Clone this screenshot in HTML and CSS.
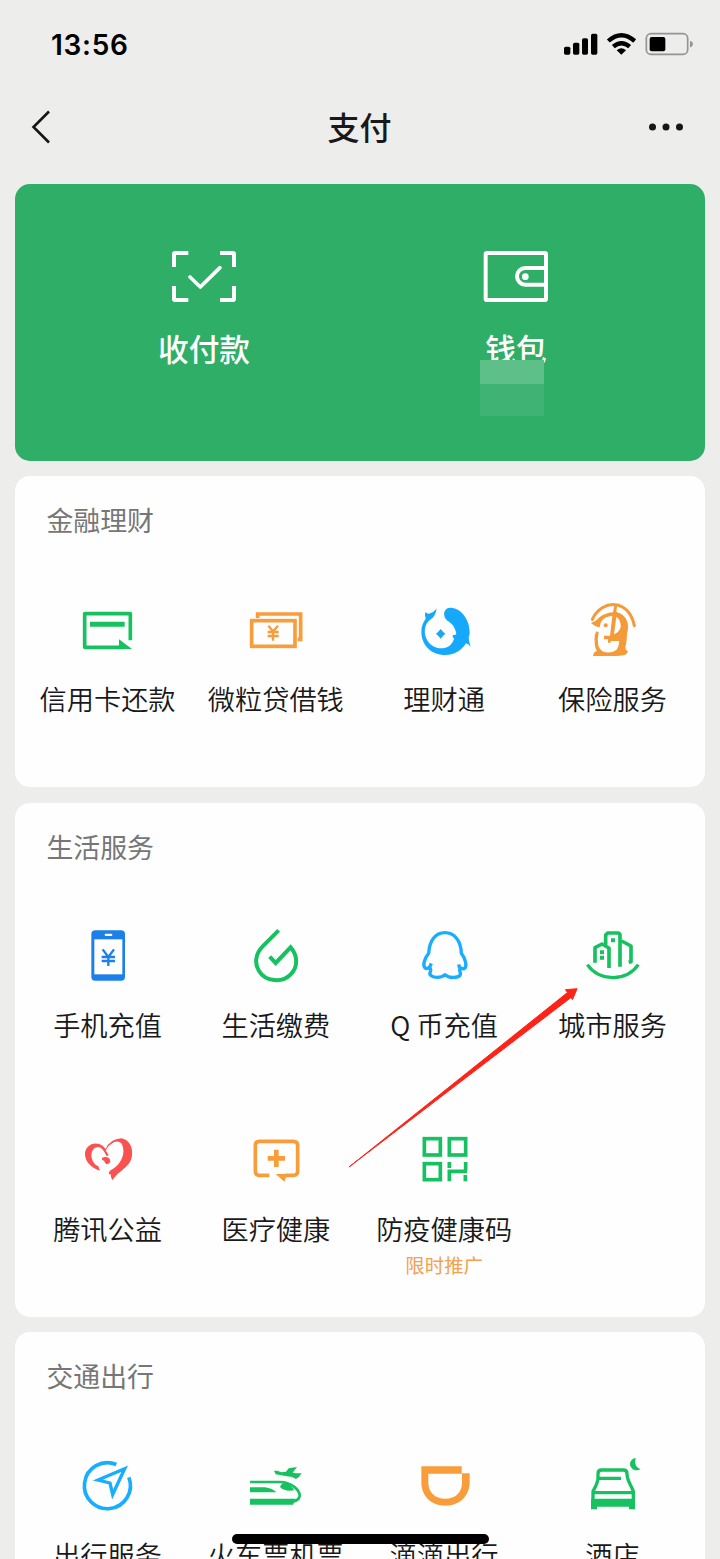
FILE: index.html
```
<!DOCTYPE html>
<html lang="zh-CN">
<head>
<meta charset="utf-8">
<title>支付</title>
<link rel="stylesheet" href="styles.css">
</head>
<body>
<div class="screen">
  <header class="status-bar">
    <span class="time">13:56</span>
    <svg class="status-icons" viewBox="0 0 540 150">
      <rect x="72" y="80" width="19" height="24" rx="5"/>
      <rect x="99" y="68" width="19" height="36" rx="5"/>
      <rect x="126" y="55" width="18" height="49" rx="5"/>
      <rect x="153" y="41" width="19" height="63" rx="5"/>
      <g fill="none" stroke="#000" stroke-width="13">
        <path d="M205 63Q244 28 284 63"/>
        <path d="M220 80Q244 59 269 80"/>
      </g>
      <path d="M230 91Q244 78 258 91L244 104Z"/>
      <rect x="319" y="41" width="124" height="62" rx="14" fill="none" stroke="#949494" stroke-width="5"/>
      <rect x="329" y="51" width="47" height="43" rx="6"/>
      <path d="M450 62Q459 65 459 72Q459 79 450 83Z" fill="#949494"/>
    </svg>
  </header>
  <nav class="nav-bar">
    <svg class="nav-icon" viewBox="0 0 40 40"><path d="M29 4.500L13.500 20L29 35.500" fill="none" stroke="#161616" stroke-width="2.600"/></svg>
    <h1 class="nav-title">支付</h1>
    <svg class="nav-icon" viewBox="0 0 40 40"><g fill="#161616"><circle cx="6.500" cy="20" r="3.500"/><circle cx="20" cy="20" r="3.500"/><circle cx="33.500" cy="20" r="3.500"/></g></svg>
  </nav>

  <main class="cards">
    <section class="pay-card">
      <div class="pay-item">
        <svg class="pay-icon" viewBox="84 30 216 216" fill="none" stroke="#fff" stroke-width="12">
          <path d="M145 69H106Q102 69 102 73V111M240 69H278Q282 69 282 73V111M102 168V206Q102 210 106 210H145M240 210H278Q282 210 282 206V168"/>
          <path d="M150 141L181 171L240 113" stroke-width="11" stroke-linecap="round" stroke-linejoin="round"/>
        </svg>
        <span class="pay-label">收付款</span>
      </div>
      <div class="pay-item">
        <svg class="pay-icon" viewBox="1020 30 216 216" fill="none" stroke="#fff" stroke-width="12">
          <rect x="1037" y="69" width="181" height="141" rx="4"/>
          <path d="M1218 114H1156A25 25 0 0 0 1156 164H1218"/>
          <circle cx="1156" cy="140" r="10" fill="#fff" stroke="none"/>
        </svg>
        <span class="pay-label">钱包</span>
        <span class="balance-mask"></span>
      </div>
    </section>

    <section class="card finance">
      <h2 class="card-title">金融理财</h2>
      <div class="grid">
        <div class="item">
          <svg class="icon" viewBox="51 30 180 180">
            <path d="M208 151V71H71V172H190" fill="none" stroke="#17c160" stroke-width="11" stroke-linejoin="round"/>
            <path d="M87 103H191" stroke="#17c160" stroke-width="15"/>
            <path d="M174 148L213 177H174Z" fill="#17c160"/>
          </svg>
          <span class="label">信用卡还款</span>
        </div>
        <div class="item">
          <svg class="icon" viewBox="556 30 180 180" fill="none" stroke="#f99d3b" stroke-width="11">
            <rect x="573" y="92" width="130" height="77"/>
            <path d="M591 84V72H720V148H711"/>
            <path d="M623 107L637 124L652 107M637 124V152M621 126H654M621 138H654" stroke-width="7"/>
          </svg>
          <span class="label">微粒贷借钱</span>
        </div>
        <div class="item">
          <svg class="icon" viewBox="71 30 180 180" fill="#16a8fb">
            <path d="M105 66Q113 74 121 69Q130 66 139 56Q136 78 121 88C101 102 98 132 112 153C127 176 158 181 177 168Q190 157 191 144Q185 143 188 134Q194 136 198 132C195 115 188 103 174 94C163 87 160 75 162 66Q167 52 182 53C213 55 239 89 238 129Q237 137 235 143Q236 156 241 170Q234 161 227 160C211 186 182 199 153 194C110 189 86 150 95 108Q98 97 106 86Q102 76 105 66Z"/>
            <path d="M151 117L158 125L165 131L158 138L151 146L144 138L137 131L144 125Z"/>
          </svg>
          <span class="label">理财通</span>
        </div>
        <div class="item">
          <svg class="icon" viewBox="576 30 180 180" fill="#f49a39">
            <path d="M607 88C622 56 649 42 675 44C704 46 725 70 733 107" fill="none" stroke="#f49a39" stroke-width="9" stroke-linecap="round"/>
            <path fill-rule="evenodd" d="M603 99Q618 94 627 83Q643 69 669 67L674 42H682L679 66Q703 72 711 93Q717 109 711 132Q710 158 706 171Q706 180 713 183Q714 192 701 196Q686 199 666 198H609Q611 185 621 183Q615 177 614 156Q612 136 619 124L626 127Q621 148 625 167Q631 184 648 187Q666 190 680 179Q687 169 688 153H662V158H654V148H642V137H660L667 77Q645 80 638 89Q630 97 629 112Q620 112 603 99ZM679 80L672 133Q689 126 692 111Q694 91 679 80Z"/>
            <circle cx="647" cy="106" r="6"/>
          </svg>
          <span class="label">保险服务</span>
        </div>
      </div>
    </section>

    <section class="card life">
      <h2 class="card-title">生活服务</h2>
      <div class="grid">
        <div class="item">
          <svg class="icon" viewBox="51 21 180 180">
            <rect x="91" y="34" width="101" height="151" rx="12" fill="#1d7fe9"/>
            <rect x="100" y="61" width="84" height="105" fill="#fff"/>
            <rect x="131" y="44" width="23" height="7" rx="3.500" fill="#fff"/>
            <path d="M125 91L142 114L159 91M142 114V141M122 114H162M122 126H162" fill="none" stroke="#1d7fe9" stroke-width="7"/>
          </svg>
          <span class="label">手机充值</span>
        </div>
        <div class="item">
          <svg class="icon" viewBox="556 21 180 180" fill="none" stroke="#17c160" stroke-width="12">
            <path d="M654 34L606 82C584 104 581 134 595 156C614 188 664 193 690 166C714 142 710 108 690 85L645 132L627 113"/>
          </svg>
          <span class="label">生活缴费</span>
        </div>
        <div class="item">
          <svg class="icon" viewBox="71 21 180 180" fill="none" stroke="#18adff" stroke-width="10" stroke-linejoin="round">
            <path d="M123 133L118 144Q111 151 104 147C96 139 103 118 115 103C117 65 135 41 164 41C192 41 212 65 213 103C225 119 230 138 224 147Q218 153 207 144L205 136M118 144Q123 153 120 158C115 168 125 175 141 175Q156 175 164 167Q174 176 190 175C208 175 213 168 209 158Q206 153 210 147"/>
          </svg>
          <span class="label">Q 币充值</span>
        </div>
        <div class="item">
          <svg class="icon" viewBox="576 21 180 180" fill="none" stroke="#17c160" stroke-width="11" stroke-linejoin="round">
            <path d="M615 131V86L636 75L657 87V147M647 77V48L653 42H686L690 47V143M695 66L723 81V128L716 130"/>
            <path d="M592 137C627 187 708 190 745 137" stroke-width="10"/>
            <path d="M630 100H642M630 116H642M663 64H675" stroke-width="12"/>
          </svg>
          <span class="label">城市服务</span>
        </div>
        <div class="item">
          <svg class="icon" viewBox="51 16 180 180" fill="#fa5151">
            <path d="M72 91C70 67 93 51 115 58Q127 62 134 73Q147 43 181 41C202 44 216 65 213 91C210 128 175 135 154 167Q149 158 149 149H144Q143 139 150 136C181 120 196 84 182 57Q173 47 158 53Q142 62 134 77L143 91L137 95Q126 69 112 67C89 68 86 97 99 115Q106 124 112 125L117 138C90 130 74 111 72 91Z"/>
            <path d="M123 100Q132 95 138 98Q148 100 148 111Q145 118 137 119Q130 115 130 109L123 105Z"/>
          </svg>
          <span class="label">腾讯公益</span>
        </div>
        <div class="item">
          <svg class="icon" viewBox="556 16 180 180" fill="#f99d3b">
            <path d="M626 152H597Q584 152 584 139V63Q584 50 597 50H698Q711 50 711 63V139Q711 152 698 152H673" fill="none" stroke="#f99d3b" stroke-width="11"/>
            <path d="M645 148H680L671 171ZM640 75H654V94H673V108H654V127H640V108H621V94H640Z"/>
          </svg>
          <span class="label">医疗健康</span>
        </div>
        <div class="item">
          <svg class="icon" viewBox="221 16 180 180" fill="none" stroke="#17c160" stroke-width="11">
            <rect x="252" y="42" width="48" height="49"/>
            <rect x="327" y="42" width="49" height="49"/>
            <rect x="252" y="117" width="48" height="48"/>
            <path d="M327 112V130M376 112V137M380 140H327V170M375 151V170"/>
          </svg>
          <span class="label">防疫健康码</span>
          <span class="promo">限时推广</span>
        </div>
      </div>
    </section>

    <section class="card travel">
      <h2 class="card-title">交通出行</h2>
      <div class="grid">
        <div class="item">
          <svg class="icon" viewBox="114 19 180 180" fill="none" stroke="#18adff" stroke-width="11">
            <path d="M229 44.500A69 69 0 1 0 266.500 83"/>
            <path d="M174 91L254 57L218 134L210 100Z" stroke-width="10"/>
          </svg>
          <span class="label">出行服务</span>
        </div>
        <div class="item">
          <svg class="icon" viewBox="616 19 180 180" fill="#17c160">
            <path d="M628 97H718C750 97 778 120 777 139Q775 152 757 156" fill="none" stroke="#17c160" stroke-width="8"/>
            <path d="M628 147H765L757 165H628ZM628 113H673Q696 116 707 128H628ZM718 112Q722 98 737 99Q753 107 761 122Q732 127 718 112ZM700 63L710 63L722 68L736 66L744 56L769 52L756 69Q775 72 783 70Q777 82 766 88L754 82L739 80L705 74Z"/>
          </svg>
          <span class="label">火车票机票</span>
        </div>
        <div class="item">
          <svg class="icon" viewBox="71 19 180 180" fill="#f99d3b">
            <path d="M93 50H214V71H238V97C238 140 207 168 165 168C123 168 93 140 93 97ZM114 72V99C114 127 134 147 165 147C196 147 215 127 215 99V72Z" fill-rule="evenodd"/>
          </svg>
          <span class="label">滴滴出行</span>
        </div>
        <div class="item">
          <svg class="icon" viewBox="576 19 180 180" fill="none" stroke="#17c160" stroke-width="10">
            <path d="M624 90V72Q624 61 635 61H700Q711 61 711 72C711 93 722 103 730 125V151M625 86H693M624 88Q622 102 609 125V151M609 129H730"/>
            <path d="M603 147H735V179H717V171H621V179H603Z" fill="#17c160" stroke="none"/>
            <path d="M737 24C733 45 738 53 752 58Q744 64 733 61C716 53 714 31 737 24Z" fill="#17c160" stroke="none"/>
          </svg>
          <span class="label">酒店</span>
        </div>
      </div>
    </section>
  </main>

  <svg class="arrow" viewBox="0 0 240 190"><path d="M9 186L227.500 11.500L225.500 8.700L237 7.700L232.500 18.500L231 16.500Z" fill="#ff2216" stroke="#ff2216" stroke-width="1"/></svg>
  <div class="home-indicator"></div>
</div>
</body>
</html>
```
FILE: styles.css
```
* { box-sizing: border-box; }
body { margin: 0; background: #ededec; }
.screen {
  position: relative;
  width: 720px;
  height: 1559px;
  overflow: hidden;
  background: #ededec;
  color: #191919;
  font-family: "Noto Sans CJK SC", sans-serif;
}
.status-bar {
  height: 88px;
  padding: 20px 0 0 51px;
  display: flex;
  justify-content: space-between;
  align-items: flex-start;
}
.time {
  font: 600 28px/50px Inter, sans-serif;
  letter-spacing: 0.700px;
  color: #000;
}
.status-icons { width: 180px; height: 50px; }
.nav-bar {
  height: 78px;
  padding: 0 34px 0 20px;
  display: flex;
  justify-content: space-between;
  align-items: center;
}
.nav-icon { width: 40px; height: 40px; }
.nav-title { margin: -3px 0 0 13px; font-size: 32px; font-weight: 500; line-height: 44px; }
.cards {
  padding: 18.400px 15.400px 0;
  display: flex;
  flex-direction: column;
  gap: 15.500px;
}
.pay-card {
  height: 276.500px;
  padding: 55.600px 32.600px 0;
  display: grid;
  grid-template-columns: 1fr 1fr;
  border-radius: 15px;
  background: #2eae67;
  color: #fff;
}
.pay-item {
  position: relative;
  display: flex;
  flex-direction: column;
  align-items: center;
}
.pay-icon { width: 72px; height: 72px; }
.pay-label { margin-top: 15px; font-size: 30.700px; font-weight: 500; line-height: 42px; }
.balance-mask {
  position: absolute;
  top: 120px;
  left: 120px;
  width: 64px;
  height: 56px;
  background: linear-gradient(#5ebf88 0 24px, #3fb373 24px);
}
.card { border-radius: 15px; background: #fefefe; padding: 26px 8px 0; flex: none; }
.finance { height: 311px; }
.life { height: 514px; }
.travel { height: 311px; }
.card-title {
  margin: 0 0 61.500px 23px;
  font-size: 26.900px;
  font-weight: 400;
  line-height: 36px;
  color: #767676;
}
.grid {
  display: grid;
  grid-template-columns: repeat(4, 1fr);
  grid-auto-rows: 203.500px;
}
.item { display: flex; flex-direction: column; align-items: center; }
.icon { width: 60px; height: 60px; }
.label { margin-top: 22px; font-size: 27.200px; font-weight: 350; line-height: 32px; white-space: nowrap; }
.promo { margin-top: 7px; font-size: 19.400px; line-height: 28px; color: #f3a04f; }
.arrow { position: absolute; left: 340px; top: 981px; width: 240px; height: 190px; }
.home-indicator {
  position: absolute;
  left: 232px;
  top: 1534px;
  width: 257px;
  height: 10px;
  border-radius: 5px;
  background: #000;
}
```
